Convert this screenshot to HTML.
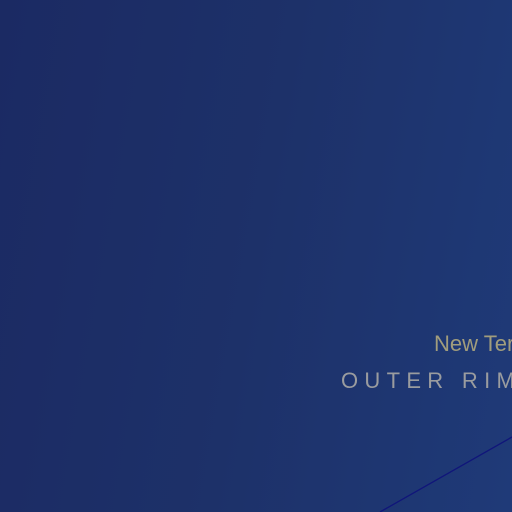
<!DOCTYPE html>
<html><head><meta charset="utf-8"><style>
html,body{margin:0;padding:0;width:512px;height:512px;overflow:hidden}
body{position:relative;background:linear-gradient(100deg,#1b2a63 0%,#1d3169 50%,#1f3a78 100%);font-family:"Liberation Sans",sans-serif}
.t1{position:absolute;left:434px;top:331px;font-size:22px;color:#a19d7d;white-space:nowrap}
.t2{position:absolute;left:341px;top:368px;font-size:22px;color:#9a9c9f;letter-spacing:6.3px;white-space:nowrap}
svg{position:absolute;left:0;top:0}
</style></head><body>
<div class="t1">New Ter</div>
<div class="t2">OUTER RIM</div>
<svg width="512" height="512"><line x1="380" y1="512" x2="512" y2="437" stroke="#10157a" stroke-width="1.3"/></svg>
</body></html>
